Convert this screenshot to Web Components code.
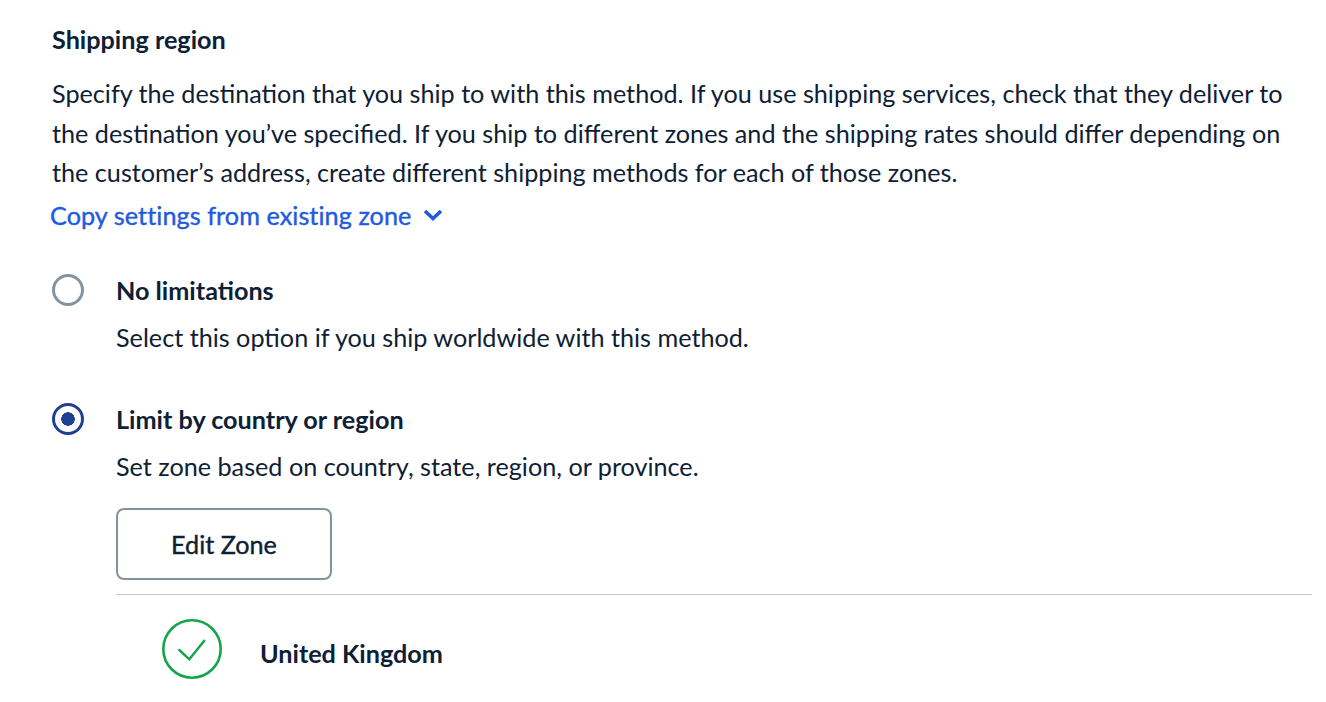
<!DOCTYPE html>
<html>
<head>
<meta charset="utf-8">
<style>
  html, body { margin: 0; background: #fff; }
  body { font-family: Lato, sans-serif; color: #0e2035; }
</style>
</head>
<body>
<shipping-region>
  <radio-option title-text="No limitations" hint="Select this option if you ship worldwide with this method."></radio-option>
  <radio-option checked title-text="Limit by country or region" hint="Set zone based on country, state, region, or province.">
    <zone-panel zone="United Kingdom"></zone-panel>
  </radio-option>
</shipping-region>
<script>
class ShippingRegion extends HTMLElement {
  constructor() {
    super();
    this.attachShadow({ mode: "open" }).innerHTML = `<style>
      :host { display: block; padding: 23px 14px 0 52px; font-size: 25.2px; }
      h2 { margin: 0 0 19px; font-size: inherit; line-height: 32px; font-weight: 700; }
      p { margin: 0; line-height: 39.5px; }
      /* no medium cut of Lato here, so thicken the regular one a little */
      a { display: inline-flex; align-items: center; gap: 12px; margin: 6px 0 43px -2px; line-height: 32px; letter-spacing: 0.07px; color: #1f5ae0; -webkit-text-stroke: 0.4px #1f5ae0; }
      a svg { margin-top: 1px; }
      .list { display: flex; flex-direction: column; gap: 50px; }
    </style>
    <h2>Shipping region</h2>
    <p>Specify the destination that you ship to with this method. If you use shipping services, check that they deliver to the destination you’ve specified. If you ship to different zones and the shipping rates should differ depending on the customer’s address, create different shipping methods for each of those zones.</p>
    <a>Copy settings from existing zone
      <svg width="20" height="12" viewBox="0 0 20 12" fill="none" stroke="#1f5ae0" stroke-width="3.6"><path d="M2 2l8 7.5L18 2"/></svg>
    </a>
    <div class="list"><slot></slot></div>`;
  }
}

class RadioOption extends HTMLElement {
  constructor() {
    super();
    this.attachShadow({ mode: "open" }).innerHTML = `<style>
      :host { display: block; }
      .row { display: grid; grid-template-columns: 32px 1fr; column-gap: 32px; }
      .dot { width: 32px; height: 32px; box-sizing: border-box; border-radius: 50%; border: 3.5px solid #82939f; }
      :host([checked]) .dot { border-color: #1f3f94; background: radial-gradient(circle, #1f3f94 0 6.5px, #fff 7px); }
      b { display: block; line-height: 32px; }
      span { display: block; margin-top: 15px; line-height: 32px; }
    </style>
    <div class="row">
      <div class="dot"></div>
      <div>
        <b>${this.getAttribute("title-text")}</b>
        <span>${this.getAttribute("hint")}</span>
        <slot></slot>
      </div>
    </div>`;
  }
}

class ZonePanel extends HTMLElement {
  constructor() {
    super();
    this.attachShadow({ mode: "open" }).innerHTML = `<style>
      :host { display: block; margin-top: 26px; }
      button { display: block; width: 216px; height: 72px; box-sizing: border-box; border: 2px solid #82939f; border-radius: 8px; background: #fff; color: inherit; font: 400 25.2px Lato, sans-serif; -webkit-text-stroke: 0.4px #0e2035; }
      .zone { display: flex; align-items: center; gap: 38px; margin-top: 14px; padding: 24px 0 0 46px; border-top: 1px solid #c3ccd3; font-weight: 700; }
      .zone span { padding-top: 9px; }
    </style>
    <button>Edit Zone</button>
    <div class="zone">
      <svg width="60" height="60" viewBox="0 0 60 60" fill="none" stroke="#16a34a"><circle cx="30" cy="30" r="28.7" stroke-width="2.6"/><path d="M17.3 31l10 9.3 15-18.6" stroke-width="2.4" stroke-linecap="round"/></svg>
      <span>${this.getAttribute("zone")}</span>
    </div>`;
  }
}

customElements.define("shipping-region", ShippingRegion);
customElements.define("radio-option", RadioOption);
customElements.define("zone-panel", ZonePanel);
</script>
</body>
</html>
